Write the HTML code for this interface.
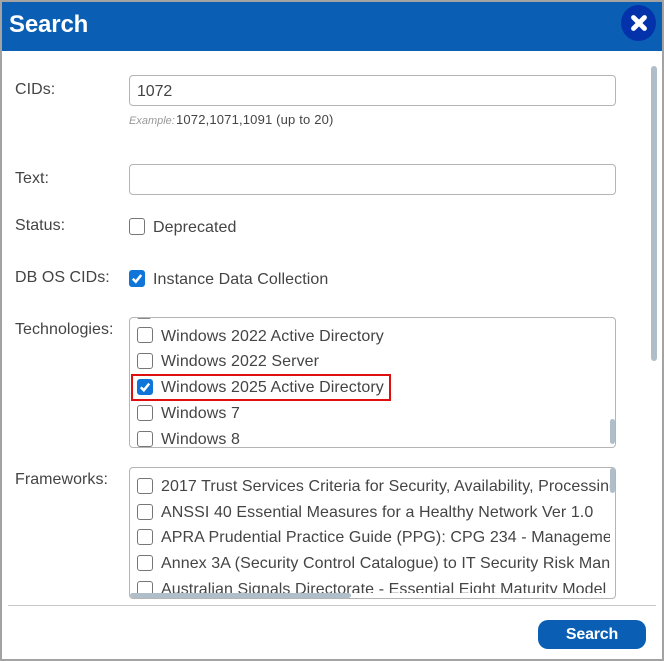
<!DOCTYPE html>
<html><head><meta charset="utf-8"><style>
html,body{margin:0;padding:0;background:#fff}
body{width:664px;height:661px;position:relative;overflow:hidden;font-family:"Liberation Sans",Arial,sans-serif;color:#444}
.a{position:absolute;white-space:nowrap}
.l{font-size:16px;line-height:18px;color:#444;left:15px;letter-spacing:.05px}
.t{font-size:16px;line-height:18px;color:#444;letter-spacing:.08px}
.in{position:absolute;left:129px;width:485px;height:29px;border:1px solid #b5b5b5;border-radius:4px;background:#fff}
.cb{position:absolute;width:14px;height:14px;border:1px solid #767676;border-radius:3px;background:#fff}
.cb.on{background:#0f75d8;border-color:#0f75d8}
.cb.on svg{position:absolute;left:0;top:0}
.box{position:absolute;left:129px;width:485px;border:1px solid #b5b5b5;border-radius:4px;overflow:hidden;background:#fff}
.sb{position:absolute;background:#afbec9;border-radius:3px}
</style></head><body>
<div class="a" style="left:0;top:0;width:664px;height:2px;background:#a3a3a3"></div>
<div class="a" style="left:0;top:0;width:2px;height:661px;background:#a3a3a3"></div>
<div class="a" style="left:662px;top:0;width:2px;height:661px;background:#a3a3a3"></div>
<div class="a" style="left:0;top:659px;width:664px;height:2px;background:#a3a3a3"></div>
<div class="a" style="left:2px;top:2px;width:660px;height:49px;background:#0a5fb4"></div>
<div class="a" style="left:9px;top:11px;font-size:24px;line-height:28px;font-weight:bold;color:#fff;letter-spacing:-.15px">Search</div>
<div class="a" style="left:621px;top:5px;width:35px;height:36px;border-radius:50%;background:#0432aa"></div>
<svg class="a" style="left:621px;top:5px" width="35" height="36"><path d="M12.5 12.5 L23.5 23.5 M23.5 12.5 L12.5 23.5" stroke="#fff" stroke-width="4.8" stroke-linecap="round"/></svg>

<div class="a sb" style="left:651px;top:66px;width:6px;height:295px"></div>

<div class="a l" style="top:81px">CIDs:</div>
<div class="in" style="top:75px"></div>
<div class="a" style="left:137px;top:83px;font-size:16px;line-height:18px;color:#444;letter-spacing:-.1px">1072</div>
<div class="a" style="left:129px;top:113px;font-size:11px;line-height:16px;font-style:italic;color:#999">Example:</div>
<div class="a" style="left:176px;top:112px;font-size:13px;line-height:16px;color:#444;letter-spacing:.17px">1072,1071,1091 (up to 20)</div>

<div class="a l" style="top:170px">Text:</div>
<div class="in" style="top:164px"></div>

<div class="a l" style="top:217px">Status:</div>
<div class="cb" style="left:129px;top:218px;height:15px"></div>
<div class="a t" style="left:153px;top:219px">Deprecated</div>

<div class="a l" style="top:269px">DB OS CIDs:</div>
<div class="cb on" style="left:129px;top:270px;height:15px"><svg width="14" height="15"><path d="M2.8 7.8 L5.8 10.8 L11.2 4" fill="none" stroke="#fff" stroke-width="2.5"/></svg></div>
<div class="a t" style="left:153px;top:271px">Instance Data Collection</div>

<div class="a l" style="top:321px">Technologies:</div>
<div class="box" style="top:317px;height:129px">
<div class="a" style="left:7px;top:-1px;width:14px;height:2px;background:#888;border-radius:0 0 2px 2px"></div>
<div class="cb" style="left:7px;top:9px"></div><div class="a t" style="left:31px;top:10px">Windows 2022 Active Directory</div>
<div class="cb" style="left:7px;top:35px"></div><div class="a t" style="left:31px;top:35px">Windows 2022 Server</div>
<div class="cb on" style="left:7px;top:61px"><svg width="14" height="14"><path d="M2.8 7.3 L5.8 10.3 L11.2 3.6" fill="none" stroke="#fff" stroke-width="2.5"/></svg></div><div class="a t" style="left:31px;top:61px">Windows 2025 Active Directory</div>
<div class="cb" style="left:7px;top:87px"></div><div class="a t" style="left:31px;top:87px">Windows 7</div>
<div class="cb" style="left:7px;top:113px"></div><div class="a t" style="left:31px;top:113px">Windows 8</div>
<div class="sb" style="left:480px;top:101px;width:5px;height:25px"></div>
</div>
<div class="a" style="left:131px;top:374px;width:256px;height:23px;border:2px solid #e00f0f"></div>

<div class="a l" style="top:471px">Frameworks:</div>
<div class="box" style="top:467px;height:130px">
<div class="a" style="left:0;top:0;width:480px;height:130px;overflow:hidden">
<div class="cb" style="left:7px;top:10px"></div><div class="a t" style="left:31px;top:10px">2017 Trust Services Criteria for Security, Availability, Processing, Confidentiality</div>
<div class="cb" style="left:7px;top:36px"></div><div class="a t" style="left:31px;top:36px">ANSSI 40 Essential Measures for a Healthy Network Ver 1.0</div>
<div class="cb" style="left:7px;top:61px"></div><div class="a t" style="left:31px;top:61px">APRA Prudential Practice Guide (PPG): CPG 234 - Management of Security</div>
<div class="cb" style="left:7px;top:87px"></div><div class="a t" style="left:31px;top:87px">Annex 3A (Security Control Catalogue) to IT Security Risk Management</div>
<div class="cb" style="left:7px;top:113px"></div><div class="a t" style="left:31px;top:113px">Australian Signals Directorate - Essential Eight Maturity Model</div>
<div class="a" style="left:0;top:125px;width:480px;height:5px;background:#fff"></div>
</div>
<div class="sb" style="left:480px;top:0;width:5px;height:25px"></div>
<div class="sb" style="left:0;top:125px;width:221px;height:5px"></div>
</div>

<div class="a" style="left:8px;top:605px;width:648px;height:1px;background:#c8c8c8"></div>
<div class="a" style="left:538px;top:620px;width:108px;height:29px;border-radius:10px;background:#0a5fb4;color:#fff;font-size:16px;font-weight:bold;line-height:30px;text-align:center;letter-spacing:-.2px">Search</div>
</body></html>
